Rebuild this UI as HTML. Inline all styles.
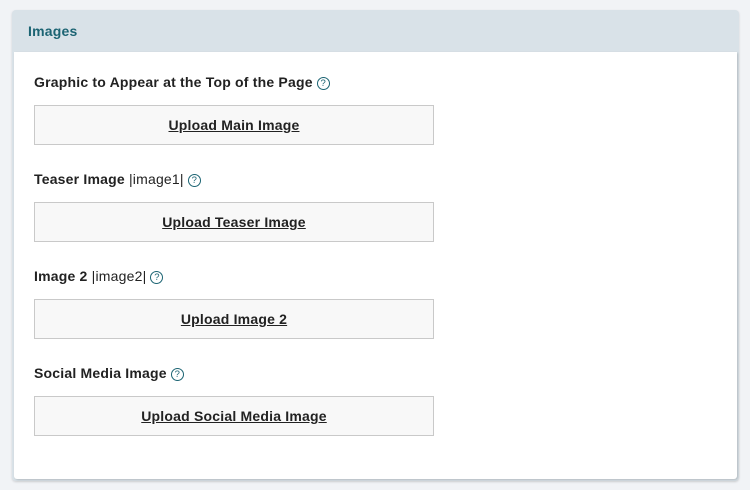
<!DOCTYPE html>
<html><head><style>
body{margin:0;width:750px;height:490px;background:#f1f3f6;font-family:"Liberation Sans",sans-serif;position:relative;overflow:hidden}
.panel{position:absolute;left:12px;top:10px;width:727px;height:471px;background:#d9e2e8;border-radius:4px;box-shadow:0 1px 2px rgba(0,0,0,.15)}
.hd{position:absolute;left:16px;top:13px;font-size:14px;font-weight:bold;color:#1c6473;letter-spacing:0.2px}
.body{position:absolute;left:2px;top:42px;width:723px;height:427px;background:#fff;border-radius:0 0 3px 3px;box-shadow:1px 1px 2px rgba(0,0,0,.18)}
.lbl{position:absolute;left:20px;font-size:14px;font-weight:bold;color:#222;letter-spacing:0.2px}
.lbl span{font-weight:normal}
.q{display:inline-block;width:11px;height:11px;border:1.5px solid #1c6473;border-radius:50%;font-size:9.5px;line-height:11px;text-align:center;color:#1c6473;font-weight:bold;vertical-align:1px;margin-left:4px;letter-spacing:0}
.btn{position:absolute;left:20px;width:398px;height:38px;border:1px solid #c9c9c9;background:#f8f8f8;text-align:center;line-height:38px;font-size:14px;font-weight:bold;color:#222;text-decoration:underline;letter-spacing:0.2px}
</style></head><body>
<div class="panel"><div class="hd">Images</div>
<div class="body">
<div class="lbl" style="top:22px">Graphic to Appear at the Top of the Page<span class="q">?</span></div>
<div class="btn" style="top:53px">Upload Main Image</div>
<div class="lbl" style="top:119px">Teaser Image <span>|image1|</span><span class="q">?</span></div>
<div class="btn" style="top:150px">Upload Teaser Image</div>
<div class="lbl" style="top:216px">Image 2 <span>|image2|</span><span class="q">?</span></div>
<div class="btn" style="top:247px">Upload Image 2</div>
<div class="lbl" style="top:313px">Social Media Image<span class="q">?</span></div>
<div class="btn" style="top:344px">Upload Social Media Image</div>
</div></div>
</body></html>
